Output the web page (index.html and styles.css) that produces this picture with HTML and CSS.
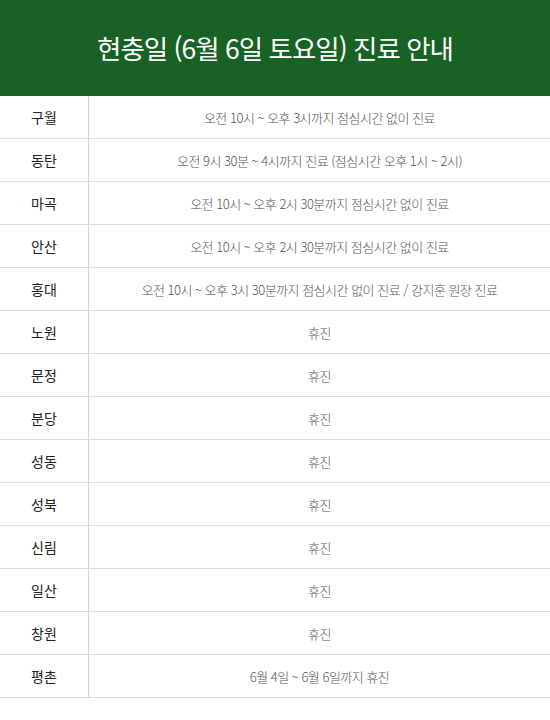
FILE: index.html
```html
<!DOCTYPE html>
<html lang="ko">
<head>
<meta charset="utf-8">
<link rel="stylesheet" href="styles.css">
</head>
<body>
<div class="notice">
  <header class="head"><h1 class="title">현충일 (6월 6일 토요일) 진료 안내</h1></header>
  <div class="table">
    <div class="row"><div class="branch">구월</div><div class="info">오전 10시 ~ 오후 3시까지 점심시간 없이 진료</div></div>
    <div class="row"><div class="branch">동탄</div><div class="info">오전 9시 30분 ~ 4시까지 진료 (점심시간 오후 1시 ~ 2시)</div></div>
    <div class="row"><div class="branch">마곡</div><div class="info">오전 10시 ~ 오후 2시 30분까지 점심시간 없이 진료</div></div>
    <div class="row"><div class="branch">안산</div><div class="info">오전 10시 ~ 오후 2시 30분까지 점심시간 없이 진료</div></div>
    <div class="row"><div class="branch">홍대</div><div class="info">오전 10시 ~ 오후 3시 30분까지 점심시간 없이 진료 / 강지훈 원장 진료</div></div>
    <div class="row"><div class="branch">노원</div><div class="info">휴진</div></div>
    <div class="row"><div class="branch">문정</div><div class="info">휴진</div></div>
    <div class="row"><div class="branch">분당</div><div class="info">휴진</div></div>
    <div class="row"><div class="branch">성동</div><div class="info">휴진</div></div>
    <div class="row"><div class="branch">성북</div><div class="info">휴진</div></div>
    <div class="row"><div class="branch">신림</div><div class="info">휴진</div></div>
    <div class="row"><div class="branch">일산</div><div class="info">휴진</div></div>
    <div class="row"><div class="branch">창원</div><div class="info">휴진</div></div>
    <div class="row"><div class="branch">평촌</div><div class="info">6월 4일 ~ 6월 6일까지 휴진</div></div>
  </div>
</div>
</body>
</html>
```
FILE: styles.css
```css
* { box-sizing: border-box; }
html, body { margin: 0; padding: 0; background: #fff; }
body { font-family: "Noto Sans CJK KR", "Noto Sans", sans-serif; }
.notice { width: 550px; }
.head {
  height: 96px;
  background: #186225;
  display: flex;
  align-items: center;
  justify-content: center;
  padding-bottom: 2px;
}
.title {
  margin: 0;
  color: #fff;
  font-size: 26.5px;
  font-weight: 400;
  letter-spacing: -1px;
}
.table { display: flex; flex-direction: column; }
.row {
  display: grid;
  grid-template-columns: 89px 1fr;
  height: 43px;
  border-bottom: 1px solid #dcdcdc;
}
.branch {
  display: flex;
  align-items: center;
  justify-content: center;
  border-right: 1px solid #d4d4d4;
  font-size: 14px;
  color: #222;
}
.info {
  display: flex;
  align-items: center;
  justify-content: center;
  font-size: 13px;
  color: #555;
  font-weight: 300;
  letter-spacing: -0.5px;
}
```
